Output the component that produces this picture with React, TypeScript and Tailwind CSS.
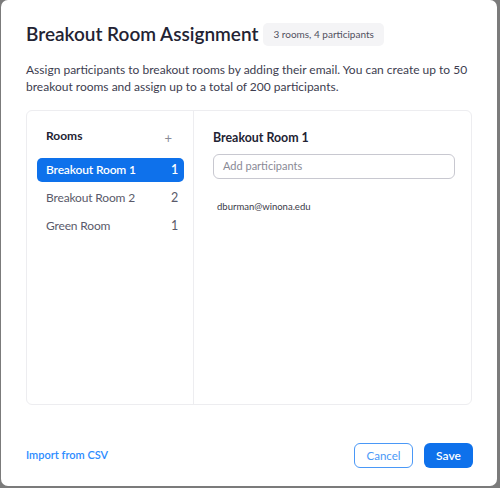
import React from "react";

export default function App() {
  const rooms = [
    { name: "Breakout Room 1", count: 1, active: true },
    { name: "Breakout Room 2", count: 2, active: false },
    { name: "Green Room", count: 1, active: false },
  ];
  return (
    <div
      className="w-[500px] h-[488px] bg-[#7b7b7b] overflow-hidden"
      style={{ fontFamily: "Lato, 'Open Sans', sans-serif" }}
    >
      <div className="ml-[1px] w-[496px] h-[486px] bg-white rounded-[7px] flex flex-col px-[25px]">
        <div className="flex items-center gap-[5px] pt-[20px]">
          <h1 className="text-[19px] leading-[28px] font-semibold text-[#232333]">
            Breakout Room Assignment
          </h1>
          <span className="h-[23px] px-[10px] rounded-[5px] bg-[#f4f4f6] text-[#505060] text-[10px] leading-[23px]">
            3 rooms, 4 participants
          </span>
        </div>
        <p className="mt-[13px] text-[12px] leading-[17px] text-[#3d3d4f]">
          Assign participants to breakout rooms by adding their email. You can create up to 50 breakout rooms and assign up to a total of 200 participants.
        </p>
        <div className="mt-[15px] h-[295px] border border-[#ededf0] rounded-[6px] flex">
          <div className="w-[167px] border-r border-[#ededf0] pl-[10px] pr-[9px] pt-[15px]">
            <div className="flex items-center justify-between pl-[9px] pr-[12px] h-[20px]">
              <span className="text-[12px] font-bold text-[#232333]">Rooms</span>
              <span className="text-[13px] text-[#8a8a96] mt-[5px]">+</span>
            </div>
            <div className="mt-[12px] flex flex-col gap-[4px]">
              {rooms.map((r) => (
                <div
                  key={r.name}
                  className={
                    r.active
                      ? "h-[24px] rounded-[5px] bg-[#0e71eb] text-white flex items-center justify-between pl-[9px] pr-[6px] text-[12px] tracking-[-0.15px] font-semibold"
                      : "h-[24px] rounded-[5px] text-[#5a5a6a] flex items-center justify-between pl-[9px] pr-[6px] text-[12px] tracking-[-0.15px]"
                  }
                >
                  <span>{r.name}</span>
                  <span className="text-[12.5px]">{r.count}</span>
                </div>
              ))}
            </div>
          </div>
          <div className="flex-1 pl-[19px] pr-[16px] pt-[18px]">
            <div className="text-[12.4px] font-bold text-[#232333] leading-[18px]">Breakout Room 1</div>
            <div className="mt-[7px] h-[25px] rounded-[6px] border border-[#c8c8d0] flex items-center pl-[9px] text-[11px] text-[#8a8a96]">
              Add participants
            </div>
            <div className="mt-[20px] pl-[4px] text-[9.5px] leading-[15px] text-[#3a3a48]">dburman@winona.edu</div>
          </div>
        </div>
        <div className="mt-[38px] flex items-center justify-between">
          <span className="text-[11px] text-[#2d8cff] font-semibold">Import from CSV</span>
          <div className="flex gap-[11px] mr-[-1px]">
            <button className="h-[25px] w-[59px] rounded-[6px] border border-[#4a98f7] text-[#4a98f7] text-[11.5px] bg-white">
              Cancel
            </button>
            <button className="h-[25px] w-[49px] rounded-[6px] bg-[#0e71eb] text-white text-[12px] font-semibold">
              Save
            </button>
          </div>
        </div>
      </div>
    </div>
  );
}
